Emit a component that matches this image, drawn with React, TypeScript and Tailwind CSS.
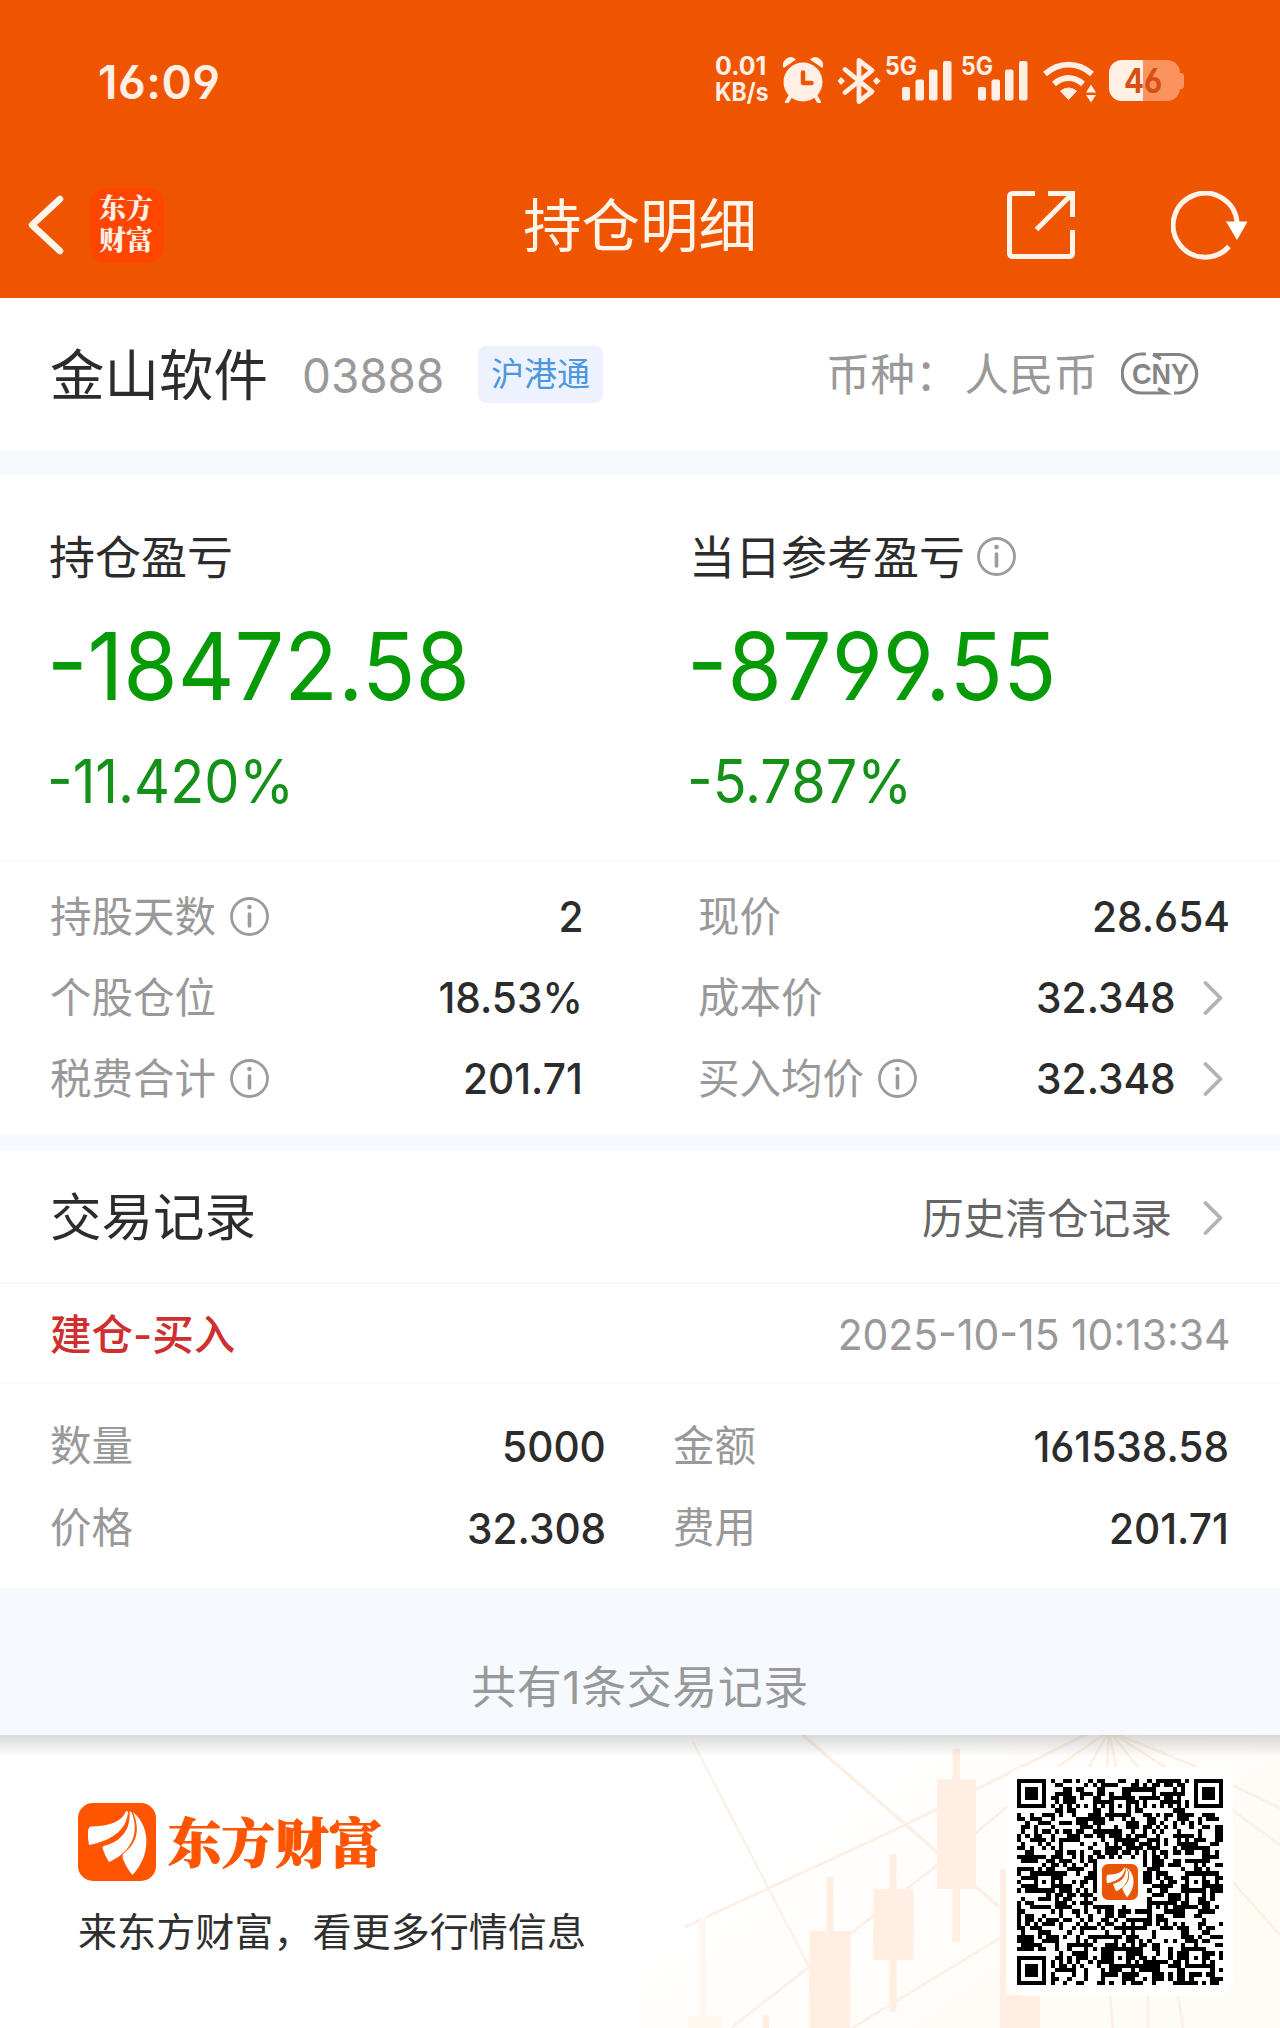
import React from "react";

function InfoIcon({ size = 39 }: { size?: number }) {
  return (
    <svg width={size} height={size} viewBox="0 0 39 39" fill="none" className="shrink-0">
      <circle cx="19.5" cy="19.5" r="18" stroke="#9b9b9b" strokeWidth="2.8" />
      <circle cx="19.5" cy="10" r="2.3" fill="#9b9b9b" />
      <path d="M19.5 17V29" stroke="#9b9b9b" strokeWidth="3.6" strokeLinecap="round" />
    </svg>
  );
}

function Chevron() {
  return (
    <svg width="20" height="34" viewBox="0 0 20 34" fill="none" className="shrink-0">
      <path d="M2.500 2L17.500 17L2.500 32" stroke="#b3b3b3" strokeWidth="3.8" strokeLinecap="round" strokeLinejoin="round" />
    </svg>
  );
}

function LeafMark() {
  return (
    <g fill="#fff">
      <path d="M48 8C44 19 31 23 13 23.5Q10.500 24 10 28Q9.500 35 11 42C32 38 49 28 50 8.500Z" />
      <path d="M51.500 8.500C53 28 42 39 25.500 43Q24 44 24.800 46Q27 53 31 59C48 52 64 34 53.500 9Z" />
      <path d="M55 9C63 28 58 41 45 51Q44 53 45 56Q49 66 54.500 72C72 54 74 25 55 9Z" />
    </g>
  );
}

function Signal() {
  return (
    <div className="flex w-[76px] items-start text-[#ffefe4]">
      <span className="w-0 whitespace-nowrap text-[25px] font-bold leading-[18px]">
        <span className="inline-block origin-left scale-x-[0.92]">5G</span>
      </span>
      <svg width="50" height="40" viewBox="0 0 50 40" fill="currentColor" className="ml-[17px] mt-1">
        <rect x="0" y="26" width="8" height="13.500" rx="2" />
        <rect x="13.500" y="18.500" width="8.500" height="21" rx="2" />
        <rect x="27" y="8.500" width="8.500" height="31" rx="2" />
        <rect x="41" y="0" width="8.500" height="39.500" rx="2" />
      </svg>
    </div>
  );
}

function StatusBar() {
  return (
    <div className="flex h-[149px] items-start justify-between pl-[98px] pr-[96px] pt-[57px] text-[#ffefe4]">
      <span className="pt-[2px] text-[46px] font-semibold leading-[46px] tracking-[0.500px]">16:09</span>
      <div className="flex h-[48px] items-start">
        <div className="flex w-[67px] flex-col text-[25px] font-bold leading-[18px]">
          <span className="-translate-x-[2px]">0.01</span>
          <span className="mt-[8px] origin-left -translate-x-[2px] scale-x-[0.92]">KB/s</span>
        </div>
        <svg width="40" height="46" viewBox="0 0 40 46" fill="currentColor" className="-ml-px">
          <path d="M1 10A7 7 0 0 1 12 2.500ZM39 10A7 7 0 0 0 28 2.500Z" stroke="currentColor" strokeWidth="1.500" strokeLinejoin="round" />
          <circle cx="20" cy="25" r="19.500" />
          <path d="M8 38L4 45M32 38L36 45" stroke="currentColor" strokeWidth="4" strokeLinecap="round" />
          <path d="M20 15.500V26H28.500" stroke="#ef5500" strokeWidth="4.500" fill="none" strokeLinecap="round" strokeLinejoin="round" />
        </svg>
        <svg width="44" height="48" viewBox="0 0 44 48" fill="none" className="ml-[14px]">
          <path d="M8 12.500L35 34.500L22 44.500V3.500L35 13.500L8 35.500" stroke="currentColor" strokeWidth="4.800" strokeLinecap="round" strokeLinejoin="round" />
          <path d="M4 20L8 24L4 28L0.500 24ZM39.500 20L43.500 24L39.500 28L36 24Z" fill="currentColor" />
        </svg>
        <div className="ml-[4px] flex">
          <Signal />
          <Signal />
        </div>
        <svg width="55" height="46" viewBox="0 0 55 46" fill="none" className="ml-[5px]">
          <path d="M3 17C17 4.500 36 4.500 50 17M12 27C21 19 32 19 41 27" stroke="currentColor" strokeWidth="5.800" />
          <path d="M18.500 34Q26.500 28 34.500 34L26.500 42.500Z" fill="currentColor" stroke="currentColor" strokeLinejoin="round" />
          <path d="M44 35.500L49 27.500L54 35.500ZM44 38H54L49 45.500Z" fill="currentColor" />
        </svg>
        <div className="relative ml-[12px] mt-[3px] flex h-[41px] w-[75px] items-center">
          <div className="flex h-[41px] w-[71px] overflow-hidden rounded-[13px] bg-[#fa935d]">
            <div className="h-full w-[34px] bg-[#ffefe4]" />
          </div>
          <div className="h-4 w-1 rounded-r-[3px] bg-[#fa935d]" />
          <span className="absolute left-[15px] top-0 text-[34px] font-bold leading-[41px] text-[#d65011] [font-feature-settings:'cv03']">
            <span className="inline-block origin-left scale-x-[0.87]">46</span>
          </span>
        </div>
      </div>
    </div>
  );
}

function TitleBar() {
  return (
    <div className="relative flex h-[149px] items-center pl-[28px] pr-[33px] pt-[3px]">
      <svg width="36" height="60" viewBox="0 0 36 60" fill="none">
        <path d="M32 4L4 30L32 56" stroke="#fff4ea" strokeWidth="6.500" strokeLinecap="round" strokeLinejoin="round" />
      </svg>
      <div className="ml-[26px] flex h-[75px] w-[74px] items-center justify-center rounded-[16px] bg-[#ff4600] pb-[5px] text-center text-[27px] font-black leading-[32px] text-[#fff0e6] font-['Noto_Serif_CJK_SC','Noto_Sans_CJK_SC',serif]">
        <span className="-translate-x-px">
          东方
          <br />
          财富
        </span>
      </div>
      <h1 className="absolute inset-x-0 top-[47px] text-center text-[58.500px] leading-[60px] text-[#fff4ea]">持仓明细</h1>
      <div className="ml-auto flex items-center gap-[96px]">
        <svg width="68" height="68" viewBox="0 0 68 68" fill="none" stroke="#fff4ea" strokeWidth="5">
          <path d="M28 2.500H6Q2.500 2.500 2.500 6V62Q2.500 65.500 6 65.500H62Q65.500 65.500 65.500 62V39" />
          <path d="M41 2.500H65.500V26M64 4L29.500 38.500" />
        </svg>
        <svg width="76" height="69" viewBox="0 0 76 69" fill="none">
          <path d="M66 31A32 32 0 1 0 58 55.500" stroke="#fff4ea" strokeWidth="5" />
          <path d="M55 30.500H76.500L66 49Z" fill="#fff" />
        </svg>
      </div>
    </div>
  );
}

function StockRow() {
  return (
    <div className="flex h-[152px] items-center pl-[50px] pr-[81px]">
      <h2 className="pt-[3px] text-[54.500px] leading-none text-[#2c2c2c]">金山软件</h2>
      <span className="ml-[34px] w-[144px] pt-[3px] text-[48px] font-normal leading-none text-[#9a9a9a]">
        <span className="inline-block origin-left scale-x-[0.955]">03888</span>
      </span>
      <span className="ml-[32px] flex h-[57px] w-[125px] items-center justify-center rounded-[8px] bg-[#edf2fe] text-[33px] leading-none text-[#4b98de]">
        沪港通
      </span>
      <span className="ml-auto pt-[3px] text-[44.500px] leading-none text-[#999]">
        <span className="mr-[5px]">币种：</span>人民币
      </span>
      <svg width="78" height="44" viewBox="0 0 78 44" fill="none" className="ml-[23px]">
        <path d="M25 2H20.500A19.300 19.500 0 0 0 20.500 41H45L37 36.500M32 2.500L40 7M32 2.500H58A19 19.300 0 0 1 58 41H53" stroke="#858585" strokeWidth="3.200" />
        <text x="39.500" y="32" textAnchor="middle" textLength="57" lengthAdjust="spacingAndGlyphs" className="fill-[#858585] text-[30px] font-bold font-['Liberation_Sans',sans-serif]">
          CNY
        </text>
      </svg>
    </div>
  );
}

function Profit({ label, amount, percent, info }: { label: string; amount: string; percent: string; info?: boolean }) {
  return (
    <div className="w-[640px] shrink-0">
      <div className="flex h-[46px] items-center gap-[12px]">
        <span className="-ml-[2px] pt-[2px] text-[46px] leading-none text-[#2c2c2c]">{label}</span>
        {info && <InfoIcon />}
      </div>
      <p className="mt-[40px] w-fit origin-left scale-x-[0.936] -translate-x-[4px] text-[94px] leading-[94px] text-[#069a06]">{amount}</p>
      <p className="mt-[38px] w-fit origin-left scale-x-[0.922] -translate-x-[4px] text-[60.500px] leading-[60px] text-[#15911a]">{percent}</p>
    </div>
  );
}

function Value({ children }: { children: string }) {
  return <span className="origin-right -translate-x-px scale-x-[0.945] text-[43px] font-[450] leading-none text-[#2c2c2c]">{children}</span>;
}

function Metric({ label, value, info, more }: { label: string; value: string; info?: boolean; more?: boolean }) {
  return (
    <div className="flex h-[81px] items-center">
      <span className="-ml-px pt-[2px] text-[41.500px] leading-none text-[#999]">{label}</span>
      {info && (
        <span className="ml-[14px]">
          <InfoIcon />
        </span>
      )}
      <span className="ml-auto flex items-center">
        <Value>{value}</Value>
        {more && (
          <span className="ml-[26px] mr-[8px]">
            <Chevron />
          </span>
        )}
      </span>
    </div>
  );
}

const QR_SIZE = 49;

function isFinder(r: number, c: number): boolean | null {
  for (const [fr, fc] of [[0, 0], [0, 42], [42, 0]]) {
    const y = r - fr;
    const x = c - fc;
    if (y >= -1 && y <= 7 && x >= -1 && x <= 7) {
      const d = Math.max(Math.abs(y - 3), Math.abs(x - 3));
      return d === 3 || d <= 1;
    }
  }
  return null;
}

function isAlignment(r: number, c: number): boolean | null {
  for (const [ar, ac] of [[6, 24], [24, 6], [24, 42], [42, 24], [42, 42]]) {
    const d = Math.max(Math.abs(r - ar), Math.abs(c - ac));
    if (d <= 2) return d !== 1;
  }
  return null;
}

function qrPath(): string {
  let seed = 20251015;
  let d = "";
  for (let r = 0; r < QR_SIZE; r++) {
    for (let c = 0; c < QR_SIZE; c++) {
      seed = (Math.imul(seed, 1664525) + 1013904223) >>> 0;
      let on = seed / 4294967296 < 0.52;
      if (r === 6 || c === 6) on = (r + c) % 2 === 0;
      const fixed = isFinder(r, c) ?? isAlignment(r, c);
      if (fixed !== null) on = fixed;
      if (Math.abs(r - 24) <= 5 && Math.abs(c - 24) <= 5) on = false;
      if (on) d += `M${c} ${r}h1v1h-1z`;
    }
  }
  return d;
}

function QrCode() {
  return (
    <svg width="206" height="206" viewBox="0 0 49 49">
      <path d={qrPath()} fill="#000" shapeRendering="crispEdges" />
      <g transform="translate(20.2 20.2) scale(0.11)">
        <rect width="78" height="78" rx="14" fill="#ea5504" />
        <LeafMark />
      </g>
    </svg>
  );
}

function FooterArt() {
  return (
    <svg width="640" height="293" viewBox="640 0 640 293" fill="none" className="absolute right-0 top-0">
      <defs>
        <linearGradient id="warm" x1="0" y1="0" x2="1" y2="0.600">
          <stop offset="0.300" stopColor="#fff" />
          <stop offset="1" stopColor="#fffbf5" />
        </linearGradient>
      </defs>
      <rect x="640" width="640" height="293" fill="url(#warm)" />
      <g stroke="#fdefe3" strokeWidth="2.500">
        <path d="M803 0L937 117L999 172" strokeWidth="3.500" />
        <path d="M693 7L809 232" strokeWidth="2" />
        <path d="M685 192L901 92L1109 -12" strokeWidth="3" />
        <path d="M732 292L809 232L937 130L1007 72M852 293L1000 203" />
        <path d="M1109 -4L1057 32M1109 -4L1089 32M1109 -4L1107 32M1109 -4L1116 32M1109 -4L1138 32M1109 -4L1165 32M1109 -4L1197 32" />
        <path d="M1232 50L1280 73M1232 75L1280 110M1232 146L1280 200M1110 260L1113 293M1148 260V293M1178 260L1183 293" />
      </g>
      <g fill="#ffeee1">
        <path d="M937 44H976V154H937ZM952.500 14H960V207H952.500ZM873.500 154H913.500V225H873.500ZM889.500 119H896.500V277H889.500Z" />
        <path d="M809.500 196H850V293H809.500ZM826.500 142H833.500V196H826.500ZM1000 134H1006V293H1000ZM1000 260H1040V293H1000ZM763 280H769V293H763Z" />
      </g>
      <path d="M688 281H722V293H688ZM699 182H706V281H699Z" fill="#fff8f1" />
    </svg>
  );
}

function Footer() {
  return (
    <div className="relative flex h-[293px] justify-between overflow-hidden bg-white pl-[78px] pr-[47px]">
      <FooterArt />
      <div className="absolute inset-x-0 top-0 h-[22px] bg-gradient-to-b from-black/15 to-black/0" />
      <div className="relative pt-[68px]">
        <div className="flex items-center">
          <svg width="78" height="78" viewBox="0 0 78 78">
            <rect width="78" height="78" rx="15" fill="#ff5500" />
            <LeafMark />
          </svg>
          <span className="ml-[12px] text-[53.500px] font-black leading-none text-[#ff5500] font-['Noto_Serif_CJK_SC','Noto_Sans_CJK_SC',serif] [-webkit-text-stroke:1px_#ff5500]">
            <span className="relative -top-[2px]">东方财富</span>
          </span>
        </div>
        <p className="mt-[31px] text-[39.100px] leading-[40px] text-[#2f2f2f]">来东方财富，看更多行情信息</p>
      </div>
      <div className="relative mt-[32px] flex h-[229px] w-[226px] items-center justify-center rounded-[18px] bg-white">
        <QrCode />
      </div>
    </div>
  );
}

export default function App() {
  return (
    <div className="h-[2028px] w-[1280px] overflow-hidden bg-white font-['Inter','Noto_Sans_CJK_SC',sans-serif] [font-feature-settings:'cv03','cv04']">
      <header className="bg-[#ef5500]">
        <StatusBar />
        <TitleBar />
      </header>

      <StockRow />
      <div className="h-[25px] bg-[#f6faff]" />

      <section className="flex h-[386px] border-b border-[#f5f7fa] pl-[51px] pt-[58px]">
        <Profit label="持仓盈亏" amount="-18472.58" percent="-11.420%" />
        <Profit label="当日参考盈亏" amount="-8799.55" percent="-5.787%" info />
      </section>

      <section className="flex h-[274px] pt-[15px]">
        <div className="ml-[51px] w-[533px]">
          <Metric label="持股天数" value="2" info />
          <Metric label="个股仓位" value="18.53%" />
          <Metric label="税费合计" value="201.71" info />
        </div>
        <div className="ml-[115px] w-[532px]">
          <Metric label="现价" value="28.654" />
          <Metric label="成本价" value="32.348" more />
          <Metric label="买入均价" value="32.348" info more />
        </div>
      </section>
      <div className="h-[16px] bg-[#f6f9ff]" />

      <section>
        <div className="flex h-[133px] items-center border-b-2 border-[#f5f8fb] pl-[50px] pr-[57px]">
          <h3 className="pt-[3px] text-[51.500px] leading-none text-[#2c2c2c]">交易记录</h3>
          <span className="ml-auto mr-[31px] pt-[7px] text-[41.700px] leading-none text-[#666]">历史清仓记录</span>
          <span className="pt-[3px]">
            <Chevron />
          </span>
        </div>
        <div className="flex h-[100px] items-center justify-between border-b border-[#f8f9fb] pl-[50px] pr-[50px]">
          <span className="pt-[4px] text-[41.500px] font-medium leading-none text-[#cf2f2f]">建仓-买入</span>
          <span className="origin-right scale-x-[0.95] pt-[2px] text-[43px] leading-none text-[#999]">2025-10-15 10:13:34</span>
        </div>
        <div className="flex h-[204px] pt-[21px]">
          <div className="ml-[51px] w-[556px] [&>div]:h-[82px]">
            <Metric label="数量" value="5000" />
            <Metric label="价格" value="32.308" />
          </div>
          <div className="ml-[67px] w-[556px] [&>div]:h-[82px]">
            <Metric label="金额" value="161538.58" />
            <Metric label="费用" value="201.71" />
          </div>
        </div>
        <div className="h-[147px] bg-[#f6faff] pt-[77px] text-center text-[45px] leading-[46px] tracking-[0.500px] text-[#999]">共有1条交易记录</div>
      </section>

      <Footer />
    </div>
  );
}
